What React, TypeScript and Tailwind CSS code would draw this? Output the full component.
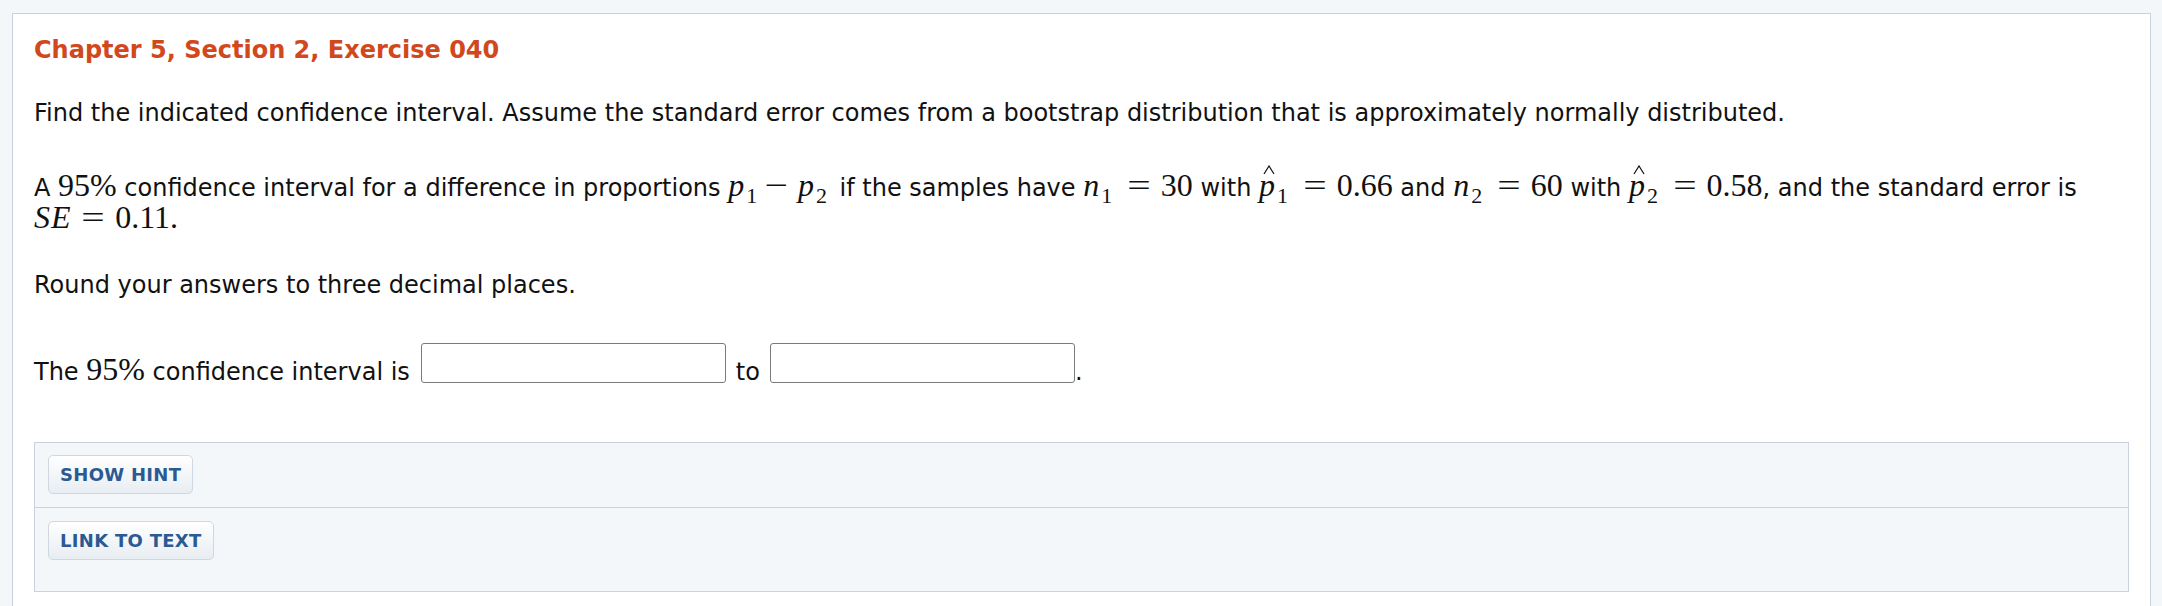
import React from "react";

function M({ children }: { children: React.ReactNode }) {
  return (
    <span className="font-['Liberation_Serif',serif] text-[32px] leading-[0.8] whitespace-nowrap">
      {children}
    </span>
  );
}

function V({ children }: { children: React.ReactNode }) {
  return <span className="italic tracking-[1px]">{children}</span>;
}

function Sub({ children }: { children: React.ReactNode }) {
  return <span className="text-[22px] leading-[0] align-[-0.3em] ml-[1px] mr-[5px]">{children}</span>;
}

function Op({ children }: { children: React.ReactNode }) {
  return <span className="mx-[0.4em] inline-block scale-x-[1.3]">{children}</span>;
}

function PHat({ n }: { n: string }) {
  return (
    <span className="whitespace-nowrap">
      <span className="relative inline-block">
        <V>p</V>
        <svg
          className="absolute left-[4px] top-[-8px]"
          width="12"
          height="10"
          viewBox="0 0 12 10"
          fill="none"
        >
          <polyline points="1,9 6,1 11,9" stroke="#111" strokeWidth="1.2" />
        </svg>
      </span>
      <Sub>{n}</Sub>
    </span>
  );
}

function Btn({ children }: { children: React.ReactNode }) {
  return (
    <button className="h-[39px] px-[11px] rounded-[5px] border border-[#cfd7e1] bg-gradient-to-b from-white to-[#e8edf2] text-[#2b5a93] font-bold text-[18px] tracking-[0.3px] font-['DejaVu_Sans',Verdana,sans-serif] leading-none">
      {children}
    </button>
  );
}

export default function App() {
  return (
    <div className="w-[2162px] h-[606px] overflow-hidden bg-[#f4f7fa] pl-[12px] pr-[11px] pt-[13px] font-['DejaVu_Sans',Verdana,sans-serif] text-[#111]">
      <div className="h-[593px] bg-white border-t border-x border-[#c9d2de] px-[21px] pt-[22px]">
        <h1 className="text-[24px] leading-[28px] font-bold text-[#d1481c]">
          Chapter 5, Section 2, Exercise 040
        </h1>
        <p className="mt-[35px] text-[24px] leading-[28px]">
          Find the indicated confidence interval. Assume the standard error comes from a bootstrap distribution that is approximately normally distributed.
        </p>
        <p className="mt-[45px] text-[24px] leading-[32px] whitespace-nowrap">
          A{" "}
          <M>95%</M> confidence interval for a difference in proportions{" "}
          <M>
            <V>p</V>
            <Sub>1</Sub>
            <span className="ml-[0.15em] mr-[0.4em] inline-block scale-x-[1.3]">−</span>
            <V>p</V>
            <Sub>2</Sub>
          </M>{" "}
          if the samples have{" "}
          <M>
            <V>n</V>
            <Sub>1</Sub>
            <Op>=</Op>30
          </M>{" "}
          with{" "}
          <M>
            <PHat n="1" />
            <Op>=</Op>0.66
          </M>{" "}
          and{" "}
          <M>
            <V>n</V>
            <Sub>2</Sub>
            <Op>=</Op>60
          </M>{" "}
          with{" "}
          <M>
            <PHat n="2" />
            <Op>=</Op>0.58
          </M>
          , and the standard error is
          <br />
          <M>
            <V>SE</V>
            <Op>=</Op>0.11.
          </M>
        </p>
        <p className="mt-[35px] text-[24px] leading-[28px]">Round your answers to three decimal places.</p>
        <div className="mt-[44px] flex items-end text-[24px] leading-[28px]">
          <span className="mb-[-3px] whitespace-nowrap">
            The <M>95%</M> confidence interval is
          </span>
          <input
            type="text"
            className="ml-[11px] w-[305px] h-[40px] border border-[#7a7a7a] rounded-[3px] bg-white"
          />
          <span className="mx-[10px] mb-[-3px]">to</span>
          <input
            type="text"
            className="w-[305px] h-[40px] border border-[#7a7a7a] rounded-[3px] bg-white"
          />
          <span className="mb-[-3px]">.</span>
        </div>
        <div className="mt-[59px] border border-[#c9d2de] bg-[#f4f7fa]">
          <div className="px-[13px] pt-[12px] pb-[13px] border-b border-[#c9d2de]">
            <Btn>SHOW HINT</Btn>
          </div>
          <div className="px-[13px] pt-[13px] pb-[31px]">
            <Btn>LINK TO TEXT</Btn>
          </div>
        </div>
      </div>
    </div>
  );
}
